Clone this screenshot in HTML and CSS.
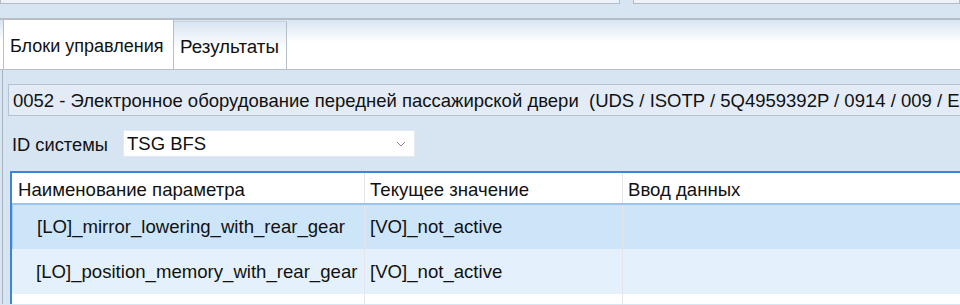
FILE: index.html
```html
<!DOCTYPE html>
<html lang="ru">
<head>
<meta charset="utf-8">
<link rel="stylesheet" href="styles.css">
</head>
<body>
<div class="top">
  <div class="box box-left"></div>
  <div class="box box-right"></div>
</div>
<div class="tabstrip">
  <div class="tab tab-first">Блоки управления</div>
  <div class="tab tab-active">Результаты</div>
</div>
<div class="panel">
  <div class="ecu">0052 - Электронное оборудование передней пассажирской двери&nbsp; (UDS / ISOTP / 5Q4959392P / 0914 / 009 / E</div>
  <div class="idrow">
    <span class="idlabel">ID системы</span>
    <div class="select">
      <span>TSG BFS</span>
      <svg class="chev" width="10" height="6" viewBox="0 0 10 6"><path d="M1 1 L5 5 L9 1" fill="none" stroke="#8a8a8a" stroke-width="1"/></svg>
    </div>
  </div>
  <div class="grid">
    <div class="row head">
      <div class="c c1">Наименование параметра</div>
      <div class="c c2">Текущее значение</div>
      <div class="c c3">Ввод данных</div>
    </div>
    <div class="row sel">
      <div class="c c1 ind">[LO]_mirror_lowering_with_rear_gear</div>
      <div class="c c2">[VO]_not_active</div>
      <div class="c c3"></div>
    </div>
    <div class="row alt">
      <div class="c c1 ind">[LO]_position_memory_with_rear_gear</div>
      <div class="c c2">[VO]_not_active</div>
      <div class="c c3"></div>
    </div>
    <div class="row empty">
      <div class="c c1"></div>
      <div class="c c2"></div>
      <div class="c c3"></div>
    </div>
  </div>
</div>
</body>
</html>
```
FILE: styles.css
```css
html, body {
  margin: 0;
  padding: 0;
}
body {
  width: 960px;
  height: 305px;
  overflow: hidden;
  background: #d7e4f2;
  font-family: "Liberation Sans", Arial, sans-serif;
  color: #111;
}
.top {
  display: flex;
  gap: 13px;
  height: 18px;
  align-items: flex-start;
}
.box {
  height: 3px;
  border: 1px solid #b2bcc8;
  border-top: none;
  background: #edf2f9;
}
.box-left { width: 618px; }
.box-right { flex: 1; }
.tabstrip {
  height: 49px;
  border-top: 2px solid #b7bec7;
  border-bottom: 1px solid #b7bec7;
  background: linear-gradient(#d8e5f3 0px, #ffffff 22px, #ffffff);
  display: flex;
  align-items: flex-end;
  padding-left: 3px;
}
.tab {
  height: 100%;
  box-sizing: border-box;
  font-size: 18px;
  display: flex;
  align-items: center;
  padding-top: 3px;
  border-right: 1px solid #b7bec7;
}
.tab-first {
  background: #ffffff;
  border-left: 1px solid #b7bec7;
  padding-left: 6px;
  width: 171px;
}
.tab-active {
  height: 48px;
  background: linear-gradient(#d9e6f4 0px, #f4f8fc 20px, #ffffff 28px);
  border-top: 1px solid #c9d1da;
  padding-left: 6px;
  width: 113px;
  font-size: 18.8px;
}
.panel {
  margin-left: 2px;
  border-left: 1px solid #a9b3bf;
  padding: 14px 0 0 5px;
}
.ecu {
  height: 30px;
  border: 1px solid #b6c1ce;
  border-right: none;
  background: #e2ebf6;
  font-size: 18.5px;
  line-height: 31px;
  padding-left: 4px;
  white-space: nowrap;
  overflow: hidden;
}
.idrow {
  display: flex;
  align-items: center;
  margin-top: 14px;
  height: 27px;
}
.idlabel {
  font-size: 18.3px;
  width: 111px;
  padding-left: 4px;
  padding-top: 2px;
}
.select {
  width: 292px;
  height: 27px;
  box-sizing: border-box;
  background: #fff;
  border: 1px solid #e3e9f0;
  display: flex;
  align-items: center;
  justify-content: space-between;
  padding: 0 8px 0 3px;
  font-size: 18.5px;
}
.chev { margin-top: 1px; }
.grid {
  margin-top: 14px;
  margin-left: 2px;
  border-top: 2px solid #3d85d8;
  border-left: 2px solid #3d85d8;
  background: #fff;
}
.row {
  display: flex;
  font-size: 18.6px;
}
.c {
  box-sizing: border-box;
  display: flex;
  align-items: center;
  white-space: nowrap;
}
.c1 { width: 353px; border-right: 1px solid #e2e6ea; padding-left: 6px; }
.c2 { width: 258px; border-right: 1px solid #e2e6ea; padding-left: 5px; }
.c3 { flex: 1; padding-left: 5px; }
.head {
  height: 30px;
  border-bottom: 2px solid #9cc3ee;
  background: #fff;
}
.head .c { padding-top: 3px; }
.ind { padding-left: 24px; }
.sel {
  height: 44px;
  background: #cce5f9;
  border-left: 1px solid #a8cbed;
}
.sel .c1 { width: 352px; }
.alt {
  height: 45px;
  background: #e4f1fc;
}
.empty {
  height: 10px;
  background: #fff;
}
```
